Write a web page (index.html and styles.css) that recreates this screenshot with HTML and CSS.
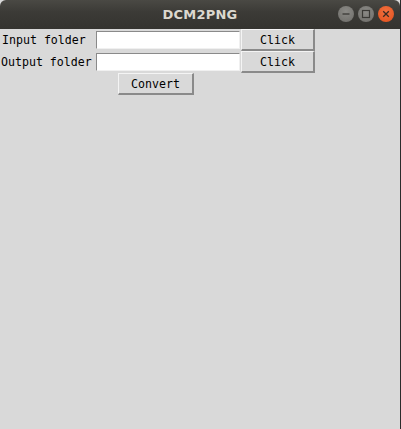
FILE: index.html
```html
<!DOCTYPE html>
<html>
<head>
<meta charset="utf-8">
<link rel="stylesheet" href="styles.css">
</head>
<body>
<div class="window">
  <div class="titlebar">
    <span class="title">DCM2PNG</span>
    <div class="controls">
      <span class="ctl ctl-min"><svg width="16" height="16" viewBox="0 0 16 16"><line x1="4.5" y1="8" x2="11.5" y2="8" stroke="#3a3935" stroke-width="1.3"/></svg></span>
      <span class="ctl ctl-max"><svg width="16" height="16" viewBox="0 0 16 16"><rect x="4.5" y="4.5" width="7" height="7" fill="none" stroke="#3a3935" stroke-width="1.2"/></svg></span>
      <span class="ctl ctl-close"><svg width="16" height="16" viewBox="0 0 16 16"><path d="M5.2 5.2 L10.8 10.8 M10.8 5.2 L5.2 10.8" stroke="#3a2a22" stroke-width="1.3"/></svg></span>
    </div>
  </div>
  <div class="content">
    <div class="row">
      <span class="label">Input folder</span>
      <span class="entry"></span>
      <span class="btn btn-click">Click</span>
    </div>
    <div class="row">
      <span class="label">Output folder</span>
      <span class="entry"></span>
      <span class="btn btn-click">Click</span>
    </div>
    <div class="row">
      <span class="btn btn-convert">Convert</span>
    </div>
  </div>
</div>
</body>
</html>
```
FILE: styles.css
```css
html, body {
  margin: 0;
  padding: 0;
  width: 401px;
  height: 429px;
  overflow: hidden;
  background: #d9d9d9;
}
.window {
  width: 400px;
  height: 429px;
  border-right: 1px solid #2b2b2b;
  background: #d9d9d9;
  display: flex;
  flex-direction: column;
}
.titlebar {
  height: 29px;
  flex: none;
  background: linear-gradient(#4a4944, #3c3b37 40%, #34332f);
  border-radius: 6px 6px 0 0;
  display: flex;
  align-items: center;
  justify-content: center;
  position: relative;
}
.title {
  color: #dcd8cf;
  font-family: "DejaVu Sans", sans-serif;
  font-weight: bold;
  font-size: 13px;
  letter-spacing: 0.2px;
}
.controls {
  position: absolute;
  right: 6px;
  top: 6px;
  display: flex;
  gap: 4px;
}
.ctl {
  width: 16px;
  height: 16px;
  border-radius: 50%;
  display: flex;
}
.ctl-min, .ctl-max {
  background: radial-gradient(circle at 50% 35%, #8b8a86, #6d6c68);
}
.ctl-close {
  background: radial-gradient(circle at 50% 35%, #f2703f, #e2501c);
}
.content {
  font-family: "DejaVu Sans Mono", monospace;
  font-size: 11.6px;
  color: #000;
  display: flex;
  flex-direction: column;
}
.row {
  display: flex;
  align-items: center;
  height: 22px;
}
.label {
  width: 94px;
  padding-left: 2px;
  white-space: nowrap;
}
.row + .row .label {
  padding-left: 1px;
  width: 95px;
}
.entry {
  width: 142px;
  height: 16px;
  background: #fff;
  border-top: 1px solid #8a8a8a;
  border-left: 1px solid #8a8a8a;
  border-bottom: 1px solid #f0f0f0;
  border-right: 1px solid #f0f0f0;
  margin-right: 1px;
}
.btn {
  box-sizing: border-box;
  height: 22px;
  display: flex;
  align-items: center;
  justify-content: center;
  background: #d9d9d9;
  border-top: 1px solid #f4f4f4;
  border-left: 1px solid #f4f4f4;
  border-bottom: 2px solid #8a8a8a;
  border-right: 2px solid #8a8a8a;
}
.btn-click {
  width: 74px;
}
.btn-convert {
  width: 76px;
  margin-left: 118px;
}
```
